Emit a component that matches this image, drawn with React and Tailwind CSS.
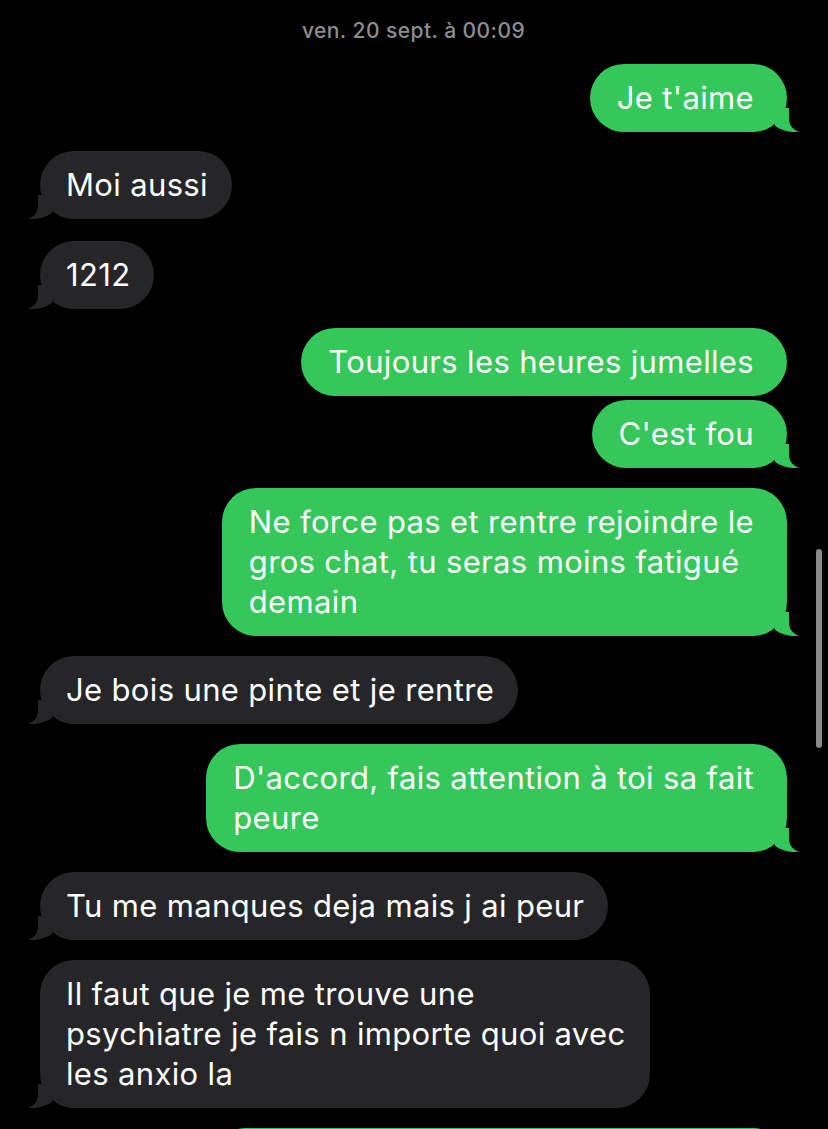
import React from 'react';

const messages = [
  { id: 1, me: true, lines: ["Je t'aime"], tail: true, gap: 'mt-[21px]' },
  { id: 2, me: false, lines: ['Moi aussi'], tail: true, gap: 'mt-[19px]' },
  { id: 3, me: false, lines: ['1212'], tail: true, gap: 'mt-[22px]' },
  { id: 4, me: true, lines: ['Toujours les heures jumelles'], tail: false, gap: 'mt-[19px]' },
  { id: 5, me: true, lines: ["C'est fou"], tail: true, gap: 'mt-[4px]' },
  {
    id: 6,
    me: true,
    lines: ['Ne force pas et rentre rejoindre le', 'gros chat, tu seras moins fatigué', 'demain'],
    tail: true,
    gap: 'mt-[20px]',
  },
  { id: 7, me: false, lines: ['Je bois une pinte et je rentre'], tail: true, gap: 'mt-[20px]' },
  { id: 8, me: true, lines: ['D\'accord, fais attention à toi sa fait', 'peure'], tail: true, gap: 'mt-[20px]' },
  { id: 9, me: false, lines: ['Tu me manques deja mais j ai peur'], tail: true, gap: 'mt-[20px]' },
  {
    id: 10,
    me: false,
    lines: ['Il faut que je me trouve une', 'psychiatre je fais n importe quoi avec', 'les anxio la'],
    tail: true,
    gap: 'mt-[20px]',
  },
];

// little curled tail at the bottom corner of a bubble
const Tail = ({ me }) => (
  <svg
    width="26"
    height="24"
    viewBox="0 0 26 24"
    className={me ? 'absolute bottom-0 -right-[12px]' : 'absolute bottom-0 -left-[12px] -scale-x-100'}
  >
    <path
      d="M0 0 L16 0 L16 10 C16 17 19 21 26 24 C18 24.5 9 23 2 18 Z"
      fill={me ? '#35c75a' : '#262628'}
    />
  </svg>
);

const Bubble = ({ msg }) => (
  <div className={`flex ${msg.me ? 'justify-end' : 'justify-start'} ${msg.gap}`}>
    <div
      className={`relative rounded-[34px] py-[14px] text-white whitespace-nowrap ${
        msg.me ? 'bg-[#35c75a] pl-[27px] pr-[33px]' : 'bg-[#262628] pl-[26px] pr-[24px]'
      }`}
    >
      {msg.lines.map((line, i) => (
        <div key={i} className="text-[31px] leading-[40px] tracking-[0.35px]">
          {line}
        </div>
      ))}
      {msg.tail && <Tail me={msg.me} />}
    </div>
  </div>
);

export default function App() {
  return (
    <div
      className="relative h-[1129px] w-[828px] overflow-hidden bg-black"
      style={{ fontFamily: 'Inter, "Liberation Sans", sans-serif' }}
    >
      <div className="flex flex-col pl-[40px] pr-[41px] pt-[19px]">
        <div className="text-center text-[21px] leading-[24px] font-medium tracking-[0.45px] text-[#8d8d92]">
          ven. 20 sept. à 00:09
        </div>
        {messages.map((m) => (
          <Bubble key={m.id} msg={m} />
        ))}
        <div className="mt-[20px] flex justify-end">
          <div className="h-[80px] w-[575px] rounded-[34px] bg-[#35c75a]" />
        </div>
      </div>
      {/* scroll indicator */}
      <div className="absolute left-[816px] top-[549px] h-[199px] w-[6px] rounded-full bg-[#8a8a8a]" />
    </div>
  );
}
